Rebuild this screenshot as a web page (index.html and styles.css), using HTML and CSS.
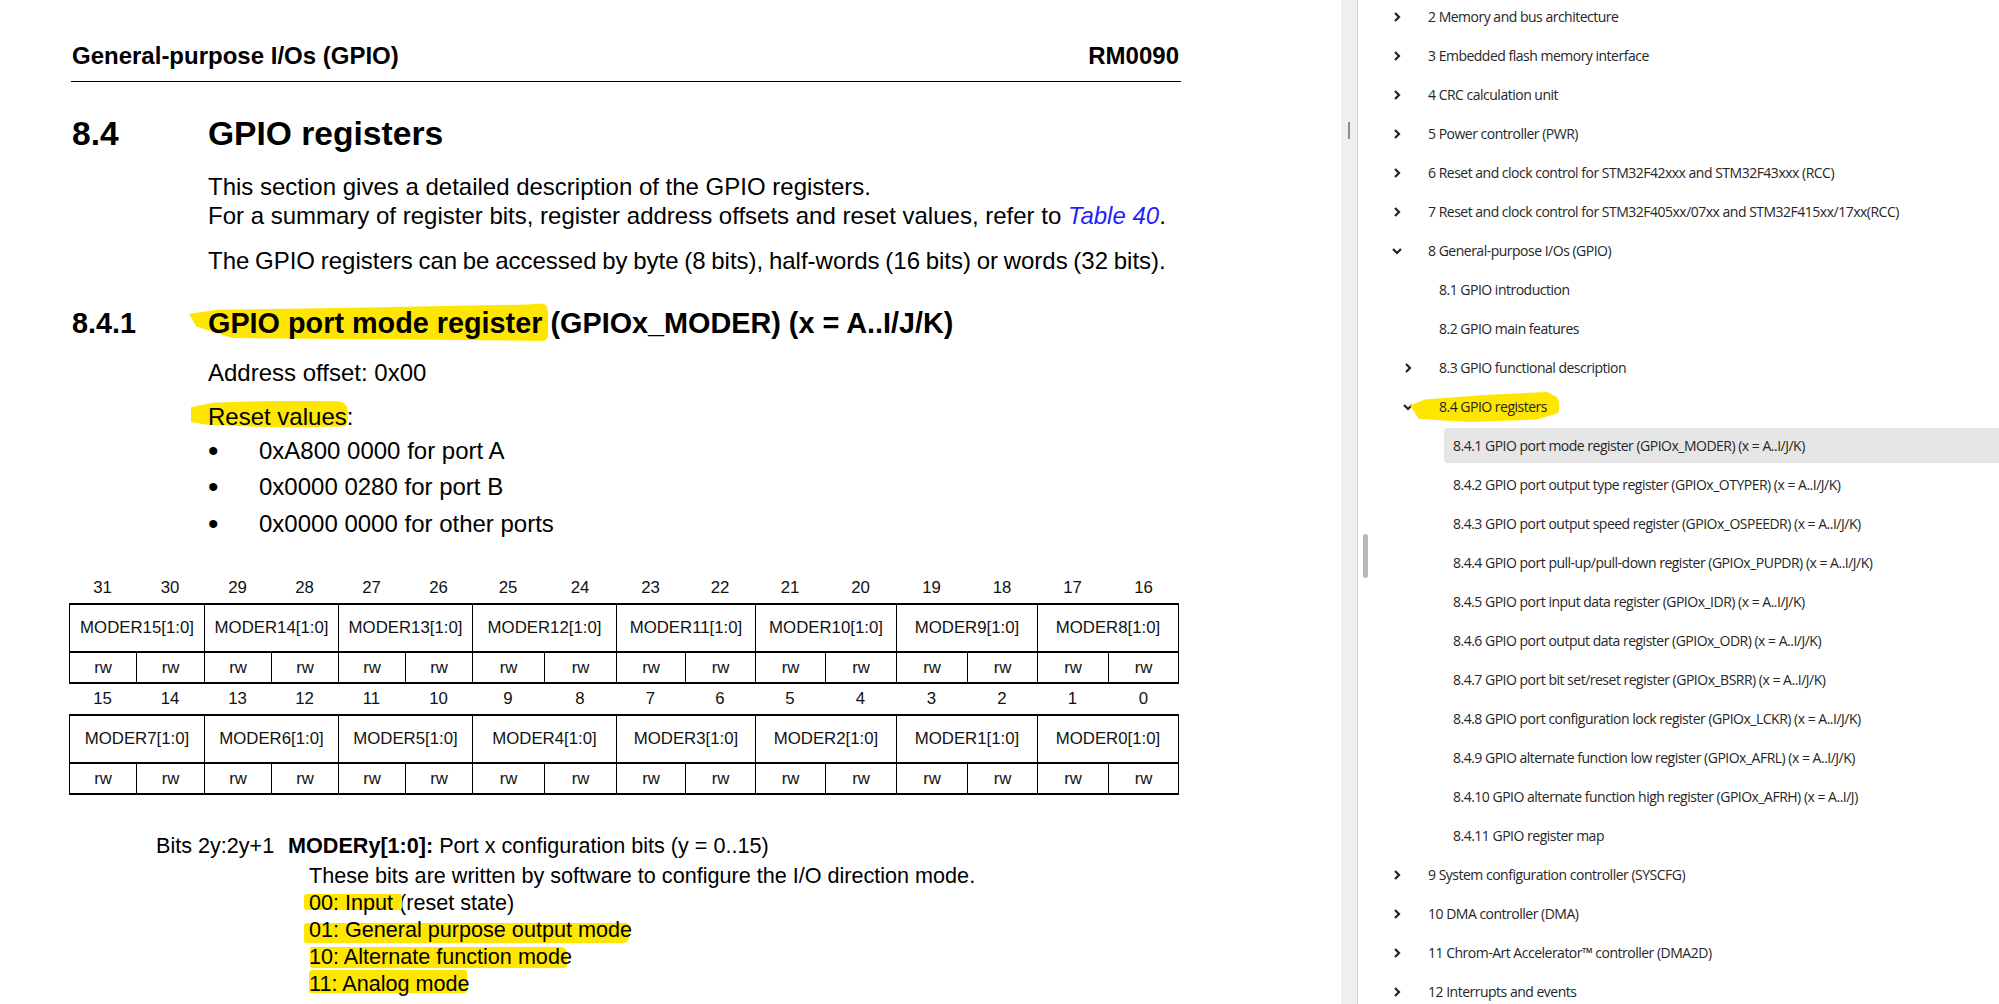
FILE: index.html
```html
<!DOCTYPE html>
<html lang="en">
<head>
<meta charset="utf-8">
<title>RM0090 - GPIO registers</title>
<link rel="stylesheet" href="styles.css">
</head>
<body>
<div class="app">
  <main class="page">
    <div class="doc">
      <header class="run-head"><span>General-purpose I/Os (GPIO)</span><span>RM0090</span></header>

      <h1 class="h1"><span class="num">8.4</span><span>GPIO registers</span></h1>
      <div class="indent">
        <p class="p intro">This section gives a detailed description of the GPIO registers.<br>For a summary of register bits, register address offsets and reset values, refer to <a class="xref">Table 40</a>.</p>
        <p class="p p2">The GPIO registers can be accessed by byte (8 bits), half-words (16 bits) or words (32 bits).</p>
      </div>

      <h2 class="h2"><span class="num">8.4.1</span><span><mark class="hl hl-title">GPIO port mode register</mark> (GPIOx_MODER) (x = A..I/J/K)</span></h2>
      <div class="indent">
        <p class="p addr">Address offset: 0x00</p>
        <p class="p reset"><mark class="hl hl-reset">Reset values</mark>:</p>
        <ul class="bullets">
          <li><span class="dot">•</span><span>0xA800 0000 for port A</span></li>
          <li><span class="dot">•</span><span>0x0000 0280 for port B</span></li>
          <li><span class="dot">•</span><span>0x0000 0000 for other ports</span></li>
        </ul>
      </div>

      <div class="reg">
        <div class="bn">31</div><div class="bn">30</div><div class="bn">29</div><div class="bn">28</div>
        <div class="bn">27</div><div class="bn">26</div><div class="bn">25</div><div class="bn">24</div>
        <div class="bn">23</div><div class="bn">22</div><div class="bn">21</div><div class="bn">20</div>
        <div class="bn">19</div><div class="bn">18</div><div class="bn">17</div><div class="bn">16</div>

        <div class="nm">MODER15[1:0]</div><div class="nm">MODER14[1:0]</div><div class="nm">MODER13[1:0]</div><div class="nm">MODER12[1:0]</div>
        <div class="nm">MODER11[1:0]</div><div class="nm">MODER10[1:0]</div><div class="nm">MODER9[1:0]</div><div class="nm last">MODER8[1:0]</div>

        <div class="rw">rw</div><div class="rw">rw</div><div class="rw">rw</div><div class="rw">rw</div>
        <div class="rw">rw</div><div class="rw">rw</div><div class="rw">rw</div><div class="rw">rw</div>
        <div class="rw">rw</div><div class="rw">rw</div><div class="rw">rw</div><div class="rw">rw</div>
        <div class="rw">rw</div><div class="rw">rw</div><div class="rw">rw</div><div class="rw last">rw</div>

        <div class="bn bn2">15</div><div class="bn bn2">14</div><div class="bn bn2">13</div><div class="bn bn2">12</div>
        <div class="bn bn2">11</div><div class="bn bn2">10</div><div class="bn bn2">9</div><div class="bn bn2">8</div>
        <div class="bn bn2">7</div><div class="bn bn2">6</div><div class="bn bn2">5</div><div class="bn bn2">4</div>
        <div class="bn bn2">3</div><div class="bn bn2">2</div><div class="bn bn2">1</div><div class="bn bn2">0</div>

        <div class="nm">MODER7[1:0]</div><div class="nm">MODER6[1:0]</div><div class="nm">MODER5[1:0]</div><div class="nm">MODER4[1:0]</div>
        <div class="nm">MODER3[1:0]</div><div class="nm">MODER2[1:0]</div><div class="nm">MODER1[1:0]</div><div class="nm last">MODER0[1:0]</div>

        <div class="rw">rw</div><div class="rw">rw</div><div class="rw">rw</div><div class="rw">rw</div>
        <div class="rw">rw</div><div class="rw">rw</div><div class="rw">rw</div><div class="rw">rw</div>
        <div class="rw">rw</div><div class="rw">rw</div><div class="rw">rw</div><div class="rw">rw</div>
        <div class="rw">rw</div><div class="rw">rw</div><div class="rw">rw</div><div class="rw last">rw</div>
      </div>

      <div class="bits">
        <div class="bits-label">Bits 2y:2y+1</div>
        <div class="bits-main">
          <div class="bits-line"><b>MODERy[1:0]:</b> Port x configuration bits (y = 0..15)</div>
          <div class="bits-body">
            <div>These bits are written by software to configure the I/O direction mode.</div>
            <div><mark class="hl hl-d0">00: Input </mark>(reset state)</div>
            <div><mark class="hl hl-d1">01: General purpose output mode</mark></div>
            <div><mark class="hl hl-d2">10: Alternate function mode</mark></div>
            <div><mark class="hl hl-d3">11: Analog mode</mark></div>
          </div>
        </div>
      </div>
    </div>
  </main>

  <div class="splitter"><span class="grip"></span></div>

  <aside class="toc">
    <span class="thumb"></span>
    <nav class="toc-list">
      <div class="ti l1"><span class="chev"><svg viewBox="0 0 10 10"><polyline points="3,1 7,5 3,9"/></svg></span><span class="tt">2 Memory and bus architecture</span></div>
      <div class="ti l1"><span class="chev"><svg viewBox="0 0 10 10"><polyline points="3,1 7,5 3,9"/></svg></span><span class="tt">3 Embedded flash memory interface</span></div>
      <div class="ti l1"><span class="chev"><svg viewBox="0 0 10 10"><polyline points="3,1 7,5 3,9"/></svg></span><span class="tt">4 CRC calculation unit</span></div>
      <div class="ti l1"><span class="chev"><svg viewBox="0 0 10 10"><polyline points="3,1 7,5 3,9"/></svg></span><span class="tt">5 Power controller (PWR)</span></div>
      <div class="ti l1"><span class="chev"><svg viewBox="0 0 10 10"><polyline points="3,1 7,5 3,9"/></svg></span><span class="tt">6 Reset and clock control for STM32F42xxx and STM32F43xxx (RCC)</span></div>
      <div class="ti l1"><span class="chev"><svg viewBox="0 0 10 10"><polyline points="3,1 7,5 3,9"/></svg></span><span class="tt">7 Reset and clock control for STM32F405xx/07xx and STM32F415xx/17xx(RCC)</span></div>
      <div class="ti l1"><span class="chev"><svg viewBox="0 0 10 10"><polyline points="1,3 5,7 9,3"/></svg></span><span class="tt">8 General-purpose I/Os (GPIO)</span></div>
      <div class="ti l2"><span class="chev"></span><span class="tt">8.1 GPIO introduction</span></div>
      <div class="ti l2"><span class="chev"></span><span class="tt">8.2 GPIO main features</span></div>
      <div class="ti l2"><span class="chev"><svg viewBox="0 0 10 10"><polyline points="3,1 7,5 3,9"/></svg></span><span class="tt">8.3 GPIO functional description</span></div>
      <div class="ti l2"><span class="chev"><svg viewBox="0 0 10 10"><polyline points="1,3 5,7 9,3"/></svg></span><span class="tt"><mark class="hl hl-toc">8.4 GPIO registers</mark></span></div>
      <div class="ti l3 sel"><span class="tt">8.4.1 GPIO port mode register (GPIOx_MODER) (x = A..I/J/K)</span></div>
      <div class="ti l3"><span class="tt">8.4.2 GPIO port output type register (GPIOx_OTYPER) (x = A..I/J/K)</span></div>
      <div class="ti l3"><span class="tt">8.4.3 GPIO port output speed register (GPIOx_OSPEEDR) (x = A..I/J/K)</span></div>
      <div class="ti l3"><span class="tt">8.4.4 GPIO port pull-up/pull-down register (GPIOx_PUPDR) (x = A..I/J/K)</span></div>
      <div class="ti l3"><span class="tt">8.4.5 GPIO port input data register (GPIOx_IDR) (x = A..I/J/K)</span></div>
      <div class="ti l3"><span class="tt">8.4.6 GPIO port output data register (GPIOx_ODR) (x = A..I/J/K)</span></div>
      <div class="ti l3"><span class="tt">8.4.7 GPIO port bit set/reset register (GPIOx_BSRR) (x = A..I/J/K)</span></div>
      <div class="ti l3"><span class="tt">8.4.8 GPIO port configuration lock register (GPIOx_LCKR) (x = A..I/J/K)</span></div>
      <div class="ti l3"><span class="tt">8.4.9 GPIO alternate function low register (GPIOx_AFRL) (x = A..I/J/K)</span></div>
      <div class="ti l3"><span class="tt">8.4.10 GPIO alternate function high register (GPIOx_AFRH) (x = A..I/J)</span></div>
      <div class="ti l3"><span class="tt">8.4.11 GPIO register map</span></div>
      <div class="ti l1"><span class="chev"><svg viewBox="0 0 10 10"><polyline points="3,1 7,5 3,9"/></svg></span><span class="tt">9 System configuration controller (SYSCFG)</span></div>
      <div class="ti l1"><span class="chev"><svg viewBox="0 0 10 10"><polyline points="3,1 7,5 3,9"/></svg></span><span class="tt">10 DMA controller (DMA)</span></div>
      <div class="ti l1"><span class="chev"><svg viewBox="0 0 10 10"><polyline points="3,1 7,5 3,9"/></svg></span><span class="tt">11 Chrom-Art Accelerator™ controller (DMA2D)</span></div>
      <div class="ti l1"><span class="chev"><svg viewBox="0 0 10 10"><polyline points="3,1 7,5 3,9"/></svg></span><span class="tt">12 Interrupts and events</span></div>
    </nav>
  </aside>
</div>
</body>
</html>
```

FILE: styles.css
```css
* { box-sizing: border-box; }

body {
  margin: 0;
  font-family: "Liberation Sans", Arial, sans-serif;
  color: #000;
  background: #fff;
}

.app {
  display: flex;
  width: 1999px;
  height: 1004px;
  overflow: hidden;
}

/* ---------- document page ---------- */
.page {
  flex: none;
  width: 1341px;
  background: #fff;
}

.doc {
  margin-left: 71px;
  width: 1110px;
  padding-top: 41px;
}

.run-head {
  display: flex;
  justify-content: space-between;
  font-size: 24px;
  font-weight: bold;
  line-height: 30px;
  padding: 0 2px 10px 1px;
  border-bottom: 1px solid #000;
}

.h1, .h2 {
  display: flex;
  margin: 0;
  padding-left: 1px;
  font-weight: bold;
  white-space: nowrap;
}

.h1 {
  margin-top: 32px;
  font-size: 33.6px;
  line-height: 40px;
}

.h2 {
  margin-top: 30.5px;
  font-size: 28.8px;
  line-height: 36px;
}

.num {
  flex: none;
  width: 136px;
}

.indent { margin-left: 137px; }

.p {
  margin: 0;
  font-size: 24px;
  line-height: 29px;
  white-space: nowrap;
}

.intro { margin-top: 17.5px; }

.p2 {
  margin-top: 16px;
  word-spacing: -1px;
}

.addr { margin-top: 16.5px; }
.reset { margin-top: 15px; }

.xref {
  color: #1f1fff;
  font-style: italic;
}

.bullets {
  margin: 2.25px 0 0;
  padding: 0;
  list-style: none;
  font-size: 24px;
  line-height: 36.5px;
}

.bullets li { display: flex; }

.dot {
  flex: none;
  width: 51px;
  font-size: 30px;
  line-height: 36.5px;
}

/* ---------- highlighter marks ---------- */
.hl {
  position: relative;
  z-index: 0;
  background: none;
  color: inherit;
}

.hl::before {
  content: "";
  position: absolute;
  z-index: -1;
  background: #ffe600;
}

.hl-title::before {
  left: -19px; right: -6px; top: -4px; bottom: -2px;
  border-radius: 3px 8px 6px 10px;
  clip-path: polygon(0 28%, 8% 18%, 50% 12%, 94% 4%, 100% 0, 100% 100%, 60% 96%, 12% 92%, 2% 62%);
}

.hl-reset::before {
  left: -17px; right: -1px; top: -2px; bottom: 2px;
  border-radius: 4px 10px 8px 4px;
  clip-path: polygon(0 25%, 14% 8%, 60% 0, 100% 4%, 100% 96%, 55% 100%, 10% 90%, 0 80%);
}

.hl-d0::before { left: -5px; right: -3px; top: 4px; bottom: 5px; border-radius: 3px; }
.hl-d1::before { left: -5px; right: 3px; top: 6px; bottom: -1px; border-radius: 3px 3px 6px 2px; }
.hl-d2::before { left: 1px; right: 5px; top: 3px; bottom: 1px; border-radius: 2px 6px 3px 3px; }
.hl-d3::before { left: 0; right: 2px; top: -1px; bottom: 3px; border-radius: 4px 2px 3px 2px; }

.hl-toc::before {
  left: -29px; right: -12px; top: -5px; bottom: -6px;
  border-radius: 8px 12px 14px 6px;
  clip-path: polygon(0 45%, 10% 25%, 50% 10%, 92% 0, 100% 20%, 100% 70%, 85% 92%, 40% 100%, 6% 90%);
}

/* ---------- register table ---------- */
.reg {
  display: grid;
  grid-template-columns: 67px 68px 67px 67px 67px 67px 72px 72px 69px 70px 70px 71px 71px 70px 71px 71px;
  margin: 29.75px 0 0 -2px;
  font-size: 16.8px;
  color: #111;
}

.bn {
  height: 31px;
  line-height: 31px;
  text-align: center;
}

.bn2 {
  height: 30px;
  line-height: 30px;
}

.nm {
  grid-column: span 2;
  height: 48px;
  display: flex;
  align-items: center;
  justify-content: center;
  border-top: 2px solid #000;
  border-left: 1px solid #000;
}

.rw {
  height: 33px;
  display: flex;
  align-items: center;
  justify-content: center;
  border-top: 2px solid #000;
  border-bottom: 2px solid #000;
  border-left: 1px solid #000;
}

.last { border-right: 1px solid #000; }

/* ---------- bit description ---------- */
.bits {
  display: flex;
  margin-top: 36.5px;
  font-size: 21.6px;
  line-height: 27px;
  white-space: nowrap;
}

.bits-label {
  flex: none;
  width: 132px;
  margin-left: 85px;
}

.bits-body {
  margin: 3px 0 0 21px;
}

/* ---------- splitter ---------- */
.splitter {
  flex: none;
  width: 17px;
  background: #efefef;
  border-right: 1px solid #d4d4d4;
  padding: 122px 0 0 7px;
}

.grip {
  display: block;
  width: 2px;
  height: 17px;
  background: #8c8c8c;
}

/* ---------- bookmarks sidebar ---------- */
.toc {
  flex: 1;
  position: relative;
  overflow: hidden;
  background: #fff;
  font-family: "Open Sans", Lato, sans-serif;
  font-size: 14px;
  letter-spacing: -0.5px;
  color: #262626;
}

.thumb {
  position: absolute;
  left: 5px;
  top: 534px;
  width: 5px;
  height: 44px;
  border-radius: 3px;
  background: #b8b8b8;
}

.toc-list { margin-top: -1px; }

.ti {
  display: flex;
  align-items: center;
  height: 35px;
  margin: 0 0 4px;
  white-space: nowrap;
}

.l1 { padding-left: 34px; }
.l2 { padding-left: 45px; }

.l3 {
  margin-left: 86px;
  padding-left: 9px;
  border-radius: 4px 0 0 4px;
}

.sel { background: #e6e6e6; }

.chev {
  flex: none;
  width: 10px;
  height: 10px;
  margin-right: 26px;
}

.chev svg {
  display: block;
  width: 10px;
  height: 10px;
  fill: none;
  stroke: #222;
  stroke-width: 2.2;
}
```
